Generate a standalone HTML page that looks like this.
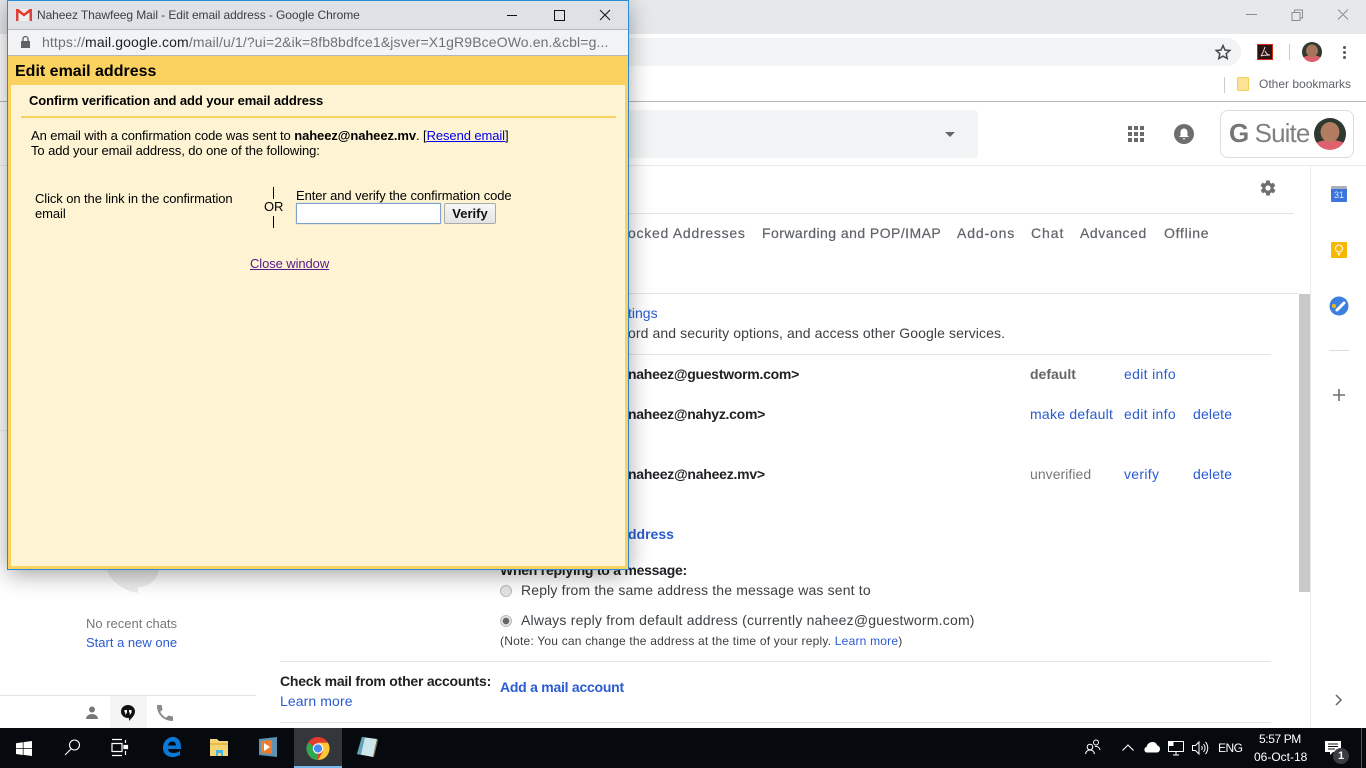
<!DOCTYPE html>
<html lang="en"><head><meta charset="utf-8"><title>Naheez Thawfeeg Mail - Edit email address</title>
<style>
*{box-sizing:border-box}
html,body{margin:0;padding:0;width:1366px;height:768px;overflow:hidden;background:#fff;font-family:"Liberation Sans",sans-serif}
.a{position:absolute}
.t{position:absolute;white-space:nowrap;line-height:20px;height:20px;font-size:14px;color:#3c4043}
.l{color:#2a5bd0}
.b{font-weight:bold;color:#202124}
.tab{color:#5f6368;-webkit-text-stroke:.2px #5f6368}
.p{font-size:13px;color:#000;letter-spacing:-.09px}
.line{position:absolute;height:1px;background:#e4e4e4}
svg{position:absolute;overflow:visible}
a{text-decoration:underline}
</style></head><body>

<div class="a" style="left:0;top:0;width:1366px;height:34px;background:#e6e9ec"></div>
<div class="a" style="left:0;top:34px;width:1366px;height:68px;background:#fff"></div>
<div class="a" style="left:600px;top:38px;width:641px;height:28px;border-radius:0 14px 14px 0;background:#f1f3f4"></div>
<div class="a" style="left:0;top:101px;width:1366px;height:1px;background:#b8b8b8"></div>
<svg style="left:1240px;top:8px" width="110" height="14" fill="none" stroke="#8a8d90" stroke-width="1"><path d="M6 6.500h11M52 4.500h8v8h-8zM54.500 4.500v-2.500h8v8h-2.500M98 1.500l10 10M108 1.500l-10 10"/></svg>
<svg style="left:1215px;top:44px" width="16" height="16" fill="none" stroke="#45494d" stroke-width="1.500"><path d="M8 1.500l2 4.500 4.800.5-3.600 3.200 1 4.800L8 12.100 3.800 14.500l1-4.800L1.200 6.500 6 6z"/></svg>
<div class="a" style="left:1257px;top:44px;width:16px;height:16px;background:#2a1414;border:1px solid #d42a12"></div>
<svg style="left:1257px;top:44px" width="16" height="16" fill="none" stroke="#e8d8d8" stroke-width="1"><path d="M8 3c-1 3-2 6-4 9M8 7c1 2 2 4 5 4-2 0-6 0-9 1"/></svg>
<div class="a" style="left:1289px;top:44px;width:1px;height:16px;background:#ccc"></div>
<div class="a" style="left:1302px;top:42px;width:20px;height:20px;border-radius:50%;background:radial-gradient(ellipse 30% 32% at 50% 44%,#a8745c 96%,transparent),radial-gradient(ellipse 62% 34% at 50% 100%,#dc5f6c 96%,transparent),#2f3a2e"></div>
<div class="a" style="left:1343px;top:46px;width:3px;height:3px;border-radius:50%;background:#55595d;box-shadow:0 5px 0 #55595d,0 10px 0 #55595d"></div>
<div class="a" style="left:1224px;top:77px;width:1px;height:16px;background:#ccc"></div>
<div class="a" style="left:1237px;top:77px;width:12px;height:14px;background:#fde293;border:1px solid #f3cf62;border-radius:1px"></div>
<div class="t" style="left:1259px;top:74px;font-size:12px;color:#5f6368">Other bookmarks</div>

<div class="a" style="left:600px;top:110px;width:378px;height:48px;background:#f1f3f4;border-radius:0 4px 4px 0"></div>
<div class="a" style="left:945px;top:132px;width:0;height:0;border:5px solid transparent;border-top:5px solid #666;border-bottom:0"></div>
<svg style="left:1128px;top:126px" width="16" height="16" fill="#6a6a6a"><path d="M0 0h4v4H0zM6 0h4v4H6zM12 0h4v4h-4zM0 6h4v4H0zM6 6h4v4H6zM12 6h4v4h-4zM0 12h4v4H0zM6 12h4v4H6zM12 12h4v4h-4z"/></svg>
<svg style="left:1174px;top:124px" width="20" height="20"><circle cx="10" cy="10" r="10" fill="#6e6e6e"/><path d="M10 4.500c-2.300 0-3.500 1.800-3.500 4v3L5 13h10l-1.500-1.500v-3c0-2.200-1.200-4-3.500-4zM8.800 14.200h2.400v1h-2.400z" fill="#fff"/></svg>
<div class="a" style="left:1220px;top:110px;width:134px;height:48px;border:1px solid #dadce0;border-radius:8px;background:#fff"></div>
<div class="t" style="left:1229px;top:118px;height:30px;line-height:30px;font-size:26px;color:#808080;letter-spacing:-.9px"><b style="color:#767676">G</b> Suite</div>
<div class="a" style="left:1314px;top:118px;width:32px;height:32px;border-radius:50%;background:radial-gradient(ellipse 30% 32% at 50% 44%,#b27c60 96%,transparent),radial-gradient(ellipse 62% 32% at 50% 100%,#e0616e 96%,transparent),#2f3a2e"></div>
<div class="a" style="left:0;top:165px;width:1366px;height:1px;background:#ebebeb"></div>

<svg style="left:1259px;top:179px" width="18" height="18" viewBox="0 0 24 24" fill="#6f6f6f"><path d="M19.400 13c.1-.3.100-.7.100-1s0-.7-.1-1l2.100-1.600c.2-.2.200-.4.100-.6l-2-3.500c-.1-.2-.4-.3-.6-.2l-2.500 1c-.5-.4-1.100-.7-1.700-1l-.4-2.600c0-.3-.2-.5-.5-.5h-4c-.3 0-.5.200-.5.500l-.4 2.600c-.6.300-1.200.6-1.700 1l-2.500-1c-.2-.1-.5 0-.6.200l-2 3.500c-.1.200-.1.400.1.600L4.600 11c0 .3-.1.700-.1 1s0 .7.100 1l-2.100 1.600c-.2.200-.2.400-.1.600l2 3.500c.1.200.4.300.6.200l2.500-1c.5.400 1.100.7 1.700 1l.4 2.600c0 .3.200.5.500.5h4c.3 0 .5-.2.500-.5l.4-2.600c.6-.3 1.200-.6 1.700-1l2.500 1c.2.100.5 0 .6-.2l2-3.500c.1-.2.100-.4-.1-.6zM12 15.500a3.500 3.500 0 1 1 0-7 3.500 3.500 0 0 1 0 7z"/></svg>
<div class="line" style="left:628px;top:213px;width:666px"></div>
<div class="t tab" style="left:628px;top:223px;letter-spacing:.73px">ocked Addresses</div>
<div class="t tab" style="left:762px;top:223px;letter-spacing:.45px">Forwarding and POP/IMAP</div>
<div class="t tab" style="left:957px;top:223px;letter-spacing:.85px">Add-ons</div>
<div class="t tab" style="left:1031px;top:223px;letter-spacing:.95px">Chat</div>
<div class="t tab" style="left:1080px;top:223px;letter-spacing:.57px">Advanced</div>
<div class="t tab" style="left:1164px;top:223px;letter-spacing:.73px">Offline</div>
<div class="line" style="left:628px;top:293px;width:670px"></div>
<div class="t l" style="left:628px;top:303px">tings</div>
<div class="t" style="left:628px;top:323px;letter-spacing:.1px">ord and security options, and access other Google services.</div>
<div class="line" style="left:628px;top:354px;width:643px"></div>
<div class="t b" style="left:628px;top:364px;letter-spacing:-.27px">naheez@guestworm.com&gt;</div>
<div class="t b" style="left:1030px;top:364px;color:#666">default</div>
<div class="t l" style="left:1124px;top:364px;letter-spacing:.33px">edit info</div>
<div class="t b" style="left:628px;top:404px;letter-spacing:-.27px">naheez@nahyz.com&gt;</div>
<div class="t l" style="left:1030px;top:404px;letter-spacing:.25px">make default</div>
<div class="t l" style="left:1124px;top:404px;letter-spacing:.33px">edit info</div>
<div class="t l" style="left:1193px;top:404px;letter-spacing:.17px">delete</div>
<div class="t b" style="left:628px;top:464px;letter-spacing:-.24px">naheez@naheez.mv&gt;</div>
<div class="t" style="left:1030px;top:464px;color:#777;letter-spacing:.05px">unverified</div>
<div class="t l" style="left:1124px;top:464px;letter-spacing:.3px">verify</div>
<div class="t l" style="left:1193px;top:464px;letter-spacing:.17px">delete</div>
<div class="t l" style="left:628px;top:524px;font-weight:bold">ddress</div>
<div class="t b" style="left:500px;top:560px;letter-spacing:-.25px">When replying to a message:</div>
<div class="a" style="left:500px;top:585px;width:12px;height:12px;border-radius:50%;background:#e4e4e4;border:1px solid #bbb"></div>
<div class="t" style="left:521px;top:580px;letter-spacing:.16px">Reply from the same address the message was sent to</div>
<div class="a" style="left:500px;top:615px;width:12px;height:12px;border-radius:50%;background:radial-gradient(circle,#666 0 3px,#e4e4e4 3.500px);border:1px solid #bbb"></div>
<div class="t" style="left:521px;top:610px;letter-spacing:.21px">Always reply from default address (currently naheez@guestworm.com)</div>
<div class="t" style="left:500px;top:631px;font-size:12px;letter-spacing:.21px">(Note: You can change the address at the time of your reply. <span class="l">Learn more</span>)</div>
<div class="line" style="left:280px;top:661px;width:991px"></div>
<div class="t b" style="left:280px;top:671px;letter-spacing:-.22px">Check mail from other accounts:</div>
<div class="t l" style="left:280px;top:691px;letter-spacing:.1px">Learn more</div>
<div class="t l" style="left:500px;top:677px;font-weight:bold;letter-spacing:-.25px">Add a mail account</div>
<div class="line" style="left:280px;top:722px;width:991px"></div>

<div class="a" style="left:1299px;top:294px;width:11px;height:298px;background:#c9c9c9"></div>
<div class="a" style="left:1310px;top:166px;width:1px;height:562px;background:#ebebeb"></div>
<div class="a" style="left:1331px;top:186px;width:16px;height:16px;background:#3d74db;border-top:3px solid #a9b0bc;border-radius:1px;color:#dfe8fa;font-size:9px;line-height:13px;text-align:center">31</div>
<div class="a" style="left:1331px;top:242px;width:16px;height:16px;background:#f6b800;border-radius:1px"></div>
<svg style="left:1331px;top:242px" width="16" height="16" fill="none" stroke="#fff" stroke-width="1"><circle cx="8" cy="6.500" r="3.500"/><path d="M6.500 11.500h3M7 13h2"/></svg>
<svg style="left:1329px;top:296px" width="20" height="20"><circle cx="10" cy="10" r="9.500" fill="#3d7fe0"/><circle cx="5" cy="10" r="2" fill="#f6b800"/><path d="M8 14l7-7" stroke="#fff" stroke-width="3" stroke-linecap="round"/></svg>
<div class="a" style="left:1329px;top:350px;width:20px;height:1px;background:#ddd"></div>
<svg style="left:1333px;top:389px" width="12" height="12" stroke="#6f6f6f" stroke-width="1.600"><path d="M6 0v12M0 6h12"/></svg>
<svg style="left:1335px;top:694px" width="8" height="12" fill="none" stroke="#666" stroke-width="1.500"><path d="M1 1l5 5-5 5"/></svg>

<div class="a" style="left:0;top:430px;width:8px;height:1px;background:#eee"></div>
<svg style="left:104px;top:570px" width="56" height="24"><path d="M3 0h52c-3 12-12 17-21 17v6C22 21 8 14 3 0z" fill="#ececec"/></svg>
<div class="t" style="left:86px;top:614px;font-size:13px;color:#777">No recent chats</div>
<div class="t l" style="left:86px;top:633px;font-size:13px">Start a new one</div>
<div class="a" style="left:0;top:695px;width:256px;height:1px;background:#e4e4e4"></div>
<div class="a" style="left:110px;top:696px;width:37px;height:32px;background:#f5f5f5"></div>
<svg style="left:85px;top:706px" width="14" height="14" fill="#777"><circle cx="7" cy="3.500" r="3"/><path d="M1 13c0-3 3-5 6-5s6 2 6 5z"/></svg>
<svg style="left:121px;top:705px" width="14" height="17"><path d="M7 0a7 6.500 0 0 1 7 6.500c0 4-3.500 6.500-6 9.500v-3H7a7 6.500 0 0 1 0-13z" fill="#111"/><path d="M3.500 5h2.500v2.500L4.800 9.500H4l.5-2h-1zM8 5h2.500v2.500L9.300 9.500h-.8l.5-2H8z" fill="#fff"/></svg>
<svg style="left:157px;top:705px" width="16" height="16" viewBox="3 3 18 18" fill="#8a8a8a"><path d="M6.600 10.800c1.400 2.800 3.800 5.100 6.600 6.600l2.200-2.200c.3-.3.700-.4 1-.2 1.100.4 2.300.6 3.600.6.600 0 1 .4 1 1V20c0 .6-.4 1-1 1C10.600 21 3 13.400 3 4c0-.6.400-1 1-1h3.500c.6 0 1 .4 1 1 0 1.300.2 2.500.6 3.600.1.300 0 .7-.2 1z"/></svg>

<div class="a" style="left:0;top:728px;width:1366px;height:40px;background:#060a0f"></div>
<svg style="left:16px;top:741px" width="16" height="15" fill="#fff"><path d="M0 2.200l6.800-1v6H0zM7.500 1.100L16 0v7.200H7.500zM0 8h6.800v6l-6.800-1zM7.500 8H16v7l-8.500-1.100z"/></svg>
<svg style="left:64px;top:739px" width="17" height="17" fill="none" stroke="#fff" stroke-width="1.100"><circle cx="10.500" cy="6" r="5"/><path d="M7 10L1 16"/></svg>
<svg style="left:111px;top:739px" width="18" height="17" fill="none" stroke="#fff" stroke-width="1.200"><path d="M1 .5h10M1 16.500h10M1 4.500h10v8H1zM14.500 1v3M14.500 12v4"/><path d="M13 6.500h3.500v3H13z" fill="#fff"/></svg>
<svg style="left:162px;top:737px" width="19" height="20"><path d="M1 11C1 4 6 0 11 0c5 0 8 4 8 10v2H6c.3 2.500 2.500 4 5 4 2.500 0 5-.8 7-2v4c-2 1-4.500 2-7.500 2C5 20 1 16.500 1 11zM6 8.500h8C14 6 12.500 4.500 10.500 4.500 8.200 4.500 6.500 6 6 8.500z" fill="#0a78d4"/></svg>
<svg style="left:209px;top:738px" width="20" height="19"><path d="M1 1h7l2 2h9v15H1z" fill="#f5d573"/><path d="M1 5h18v2H1z" fill="#e6bb4a"/><path d="M7 12h7v6H7z" fill="#3eb6e8"/><path d="M9 15h3v3H9z" fill="#f5d573"/></svg>
<svg style="left:258px;top:737px" width="20" height="20"><path d="M1 2l18-2v20L1 18z" fill="#5c93b5"/><path d="M3 4l11-1v14L3 16z" fill="#ed7d2c"/><path d="M6 6l6 4-6 4z" fill="#fff"/></svg>
<div class="a" style="left:294px;top:728px;width:48px;height:40px;background:#33373b;border-bottom:2px solid #76b9ed"></div>
<svg style="left:306px;top:737px" width="24" height="23" viewBox="0 0 24 24"><circle cx="12" cy="12" r="12" fill="#e33b2e"/><path d="M12 12L1.600 6A12 12 0 0 0 12 24z" fill="#2fa84f"/><path d="M12 6h10.400A12 12 0 0 1 12 24L17.200 15z" fill="#fcc934"/><circle cx="12" cy="12" r="5.500" fill="#fff"/><circle cx="12" cy="12" r="4.300" fill="#4a89f3"/></svg>
<svg style="left:356px;top:737px" width="22" height="21"><path d="M6 0l15 2-4 18-16-3z" fill="#cfe5ec"/><path d="M1 17l5-17 3 .5-4 17z" fill="#5ea5b5"/><path d="M17 20l4-18 1 1-4 17z" fill="#8a7a55"/></svg>

<svg style="left:1085px;top:739px" width="16" height="16" fill="none" stroke="#fff" stroke-width="1"><circle cx="5" cy="8" r="2.800"/><path d="M.5 15c.5-2.500 2-4 4.500-4s4 1.500 4.500 4"/><circle cx="11" cy="3.500" r="2.500"/><path d="M10 7.500c2.500-.5 4.500 1 5 3.500"/></svg>
<svg style="left:1122px;top:744px" width="12" height="7" fill="none" stroke="#fff" stroke-width="1.100"><path d="M.5 6.500L6 1l5.500 5.500"/></svg>
<svg style="left:1144px;top:742px" width="16" height="11" fill="#fff"><path d="M3 10.500a2.800 2.800 0 0 1-.5-5.500C3.200 2 5.500 0 8.500 0c2.300 0 4 1.200 4.800 3.500 1.700.3 2.700 2 2.700 3.500 0 2-1.400 3.500-3.200 3.500z"/></svg>
<svg style="left:1168px;top:741px" width="16" height="14" fill="none" stroke="#fff" stroke-width="1"><path d="M4.500.5h11v10H.5V.5zM5 14h6M8 10.500V14"/><path d="M1 1h4v3.500H1z" fill="#fff"/></svg>
<svg style="left:1192px;top:741px" width="17" height="14" fill="none" stroke="#fff" stroke-width="1"><path d="M.5 4.500h3L7 1v12L3.500 9.500h-3zM9.500 5c1 1.300 1 2.700 0 4M11.500 3c2 2.500 2 5.500 0 8M13.500 1c3 3.500 3 8.500 0 12"/></svg>
<div class="t" style="left:1218px;top:738px;font-size:12px;color:#fff;letter-spacing:-.5px">ENG</div>
<div class="t" style="left:1259px;top:729px;font-size:12px;color:#fff;letter-spacing:-.4px">5:57 PM</div>
<div class="t" style="left:1254px;top:747px;font-size:12px;color:#fff">06-Oct-18</div>
<svg style="left:1325px;top:741px" width="16" height="14" fill="#fff"><path d="M0 0h16v11H8l-3 3v-3H0z"/><path d="M3 3h10M3 5.500h10M3 8h7" stroke="#111" stroke-width="1"/></svg>
<div class="a" style="left:1333px;top:748px;width:16px;height:16px;border-radius:50%;background:#3a3e42;color:#fff;font-size:11px;font-weight:bold;line-height:16px;text-align:center">1</div>
<div class="a" style="left:1361px;top:728px;width:1px;height:40px;background:#555"></div>

<div class="a" style="left:8px;top:0;width:620px;height:570px;box-shadow:0 4px 22px rgba(0,0,0,.38)"></div>
<div class="a" style="left:7px;top:0;width:622px;height:570px;border:1px solid #2b8ad6;background:#fef4d4;overflow:hidden">
<div class="a" style="left:0;top:0;width:620px;height:28px;background:#dee1e6"></div>
<svg style="left:8px;top:8px" width="16" height="12"><path d="M0 0h16v12H0z" fill="#eee"/><path d="M0 0h2.500v12H0zM13.500 0H16v12h-2.500z" fill="#d9453a"/><path d="M0 0h2.500L8 4.500 13.500 0H16v1.500L8 7.500 0 1.500z" fill="#e8392b"/></svg>
<div class="t" style="left:29px;top:4px;font-size:12px;letter-spacing:-.08px;color:#3c4043">Naheez Thawfeeg Mail - Edit email address - Google Chrome</div>
<svg style="left:499px;top:8px" width="110" height="12" fill="none" stroke="#111" stroke-width="1"><path d="M0 6.500h10M47.500 1.500h10v10h-10zM93 1l10 10M103 1L93 11"/></svg>
<div class="a" style="left:0;top:28px;width:620px;height:27px;background:#f1f3f4;border-top:1px solid #b4b7bb;border-bottom:1px solid #b4b7bb"></div>
<svg style="left:13px;top:35px" width="10" height="12" fill="#5f6368"><path d="M0 5h9v7H0z"/><path d="M2 5V3a2.500 2.500 0 0 1 5 0v2" fill="none" stroke="#5f6368" stroke-width="1.300"/></svg>
<div class="t" style="left:34px;top:31px;font-size:14px;letter-spacing:.125px;color:#6e7276;width:584px;overflow:hidden">https://<span style="color:#202124">mail.google.com</span>/mail/u/1/?ui=2&amp;ik=8fb8bdfce1&amp;jsver=X1gR9BceOWo.en.&amp;cbl=g...</div>
<div class="a" style="left:0;top:55px;width:620px;height:29px;background:#fbd160"></div>
<div class="t" style="left:7px;top:61px;font-size:16px;font-weight:bold;color:#000">Edit email address</div>
<div class="a" style="left:0;top:84px;width:3px;height:484px;background:#fbd160"></div>
<div class="a" style="right:0;top:84px;width:3px;height:484px;background:#fbd160"></div>
<div class="a" style="left:0;bottom:0;width:620px;height:3px;background:#fbd160"></div>
<div class="t p" style="left:21px;top:90px;font-weight:bold">Confirm verification and add your email address</div>
<div class="a" style="left:13px;top:115px;width:595px;height:2px;background:#fbd160"></div>
<div class="t p" style="left:23px;top:125px">An email with a confirmation code was sent to <b>naheez@naheez.mv</b>. [<a style="color:#00e">Resend email</a>]</div>
<div class="t p" style="left:23px;top:140px">To add your email address, do one of the following:</div>
<div class="t p" style="left:27px;top:188px">Click on the link in the confirmation</div>
<div class="t p" style="left:27px;top:203px">email</div>
<div class="a" style="left:265px;top:186px;width:1px;height:12px;background:#000"></div>
<div class="t p" style="left:256px;top:196px">OR</div>
<div class="a" style="left:265px;top:215px;width:1px;height:12px;background:#000"></div>
<div class="t p" style="left:288px;top:185px">Enter and verify the confirmation code</div>
<div class="a" style="left:288px;top:202px;width:145px;height:21px;background:#fff;border:1px solid #7da2ce;border-radius:1px;box-shadow:0 0 1px #7da2ce"></div>
<div class="a" style="left:436px;top:202px;width:52px;height:21px;background:linear-gradient(#f8f8f8,#e4e4e4);border:1px solid #aaa;border-radius:2px;font-size:13px;font-weight:bold;line-height:19px;text-align:center;color:#111">Verify</div>
<div class="t p" style="left:242px;top:253px;color:#551a8b"><a>Close window</a></div>
</div>
</body></html>
